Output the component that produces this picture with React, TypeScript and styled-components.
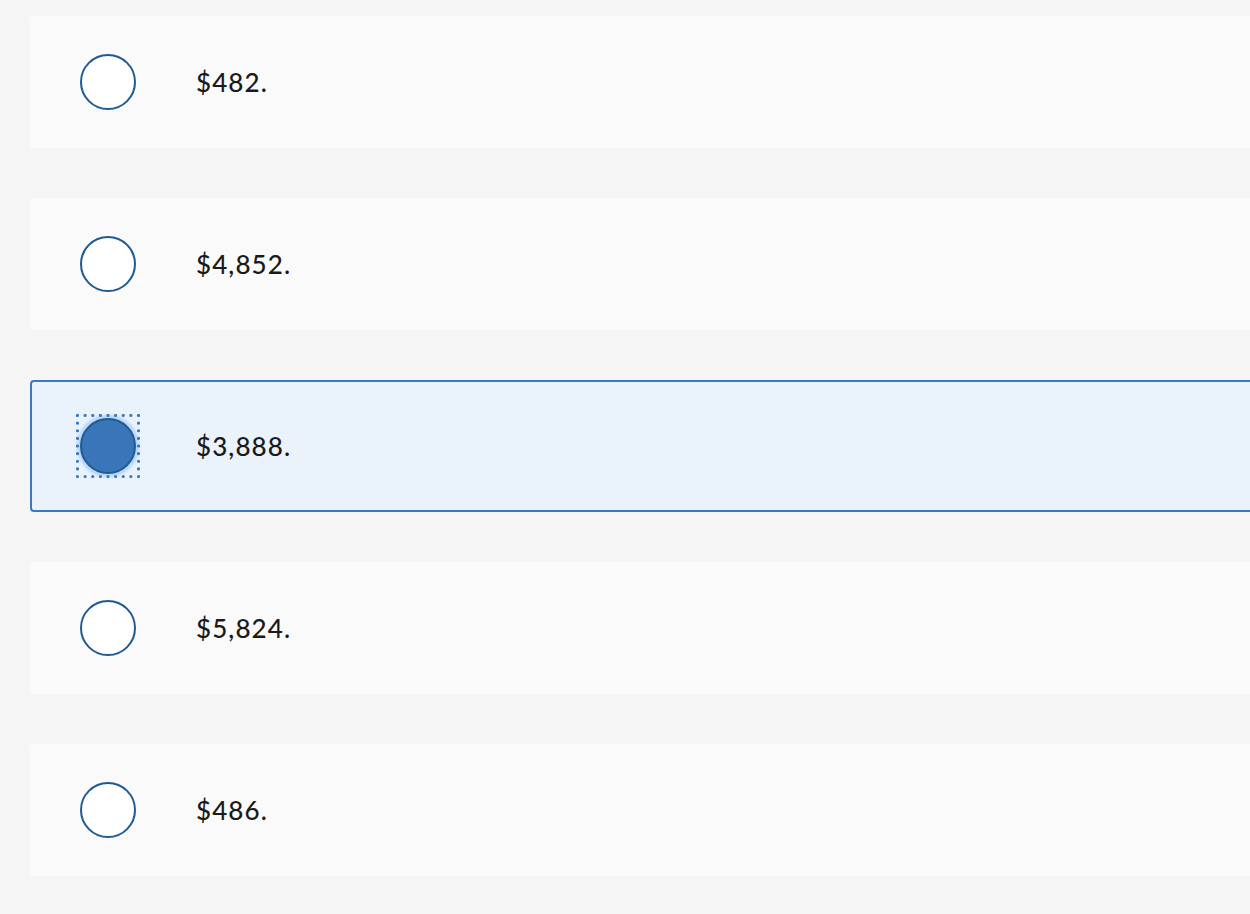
import styled, { createGlobalStyle } from "styled-components";

const GlobalStyle = createGlobalStyle`
  html, body {
    margin: 0;
    padding: 0;
    background: #f5f5f5;
    overflow: hidden;
  }
  body {
    font-family: "Lato", "Open Sans", sans-serif;
  }
`;

const answers = ["$482.", "$4,852.", "$3,888.", "$5,824.", "$486."];
const selectedIndex = 2;

// Dotted focus ring around the checked radio
function FocusRing() {
  return (
    <Ring width="64" height="64" viewBox="0 0 64 64">
      <rect
        x="1.5"
        y="1.5"
        width="61"
        height="61"
        fill="none"
        stroke="#3a78c0"
        strokeWidth="3.2"
        strokeLinecap="round"
        strokeDasharray="0 7.625"
      />
    </Ring>
  );
}

function App() {
  return (
    <>
      <GlobalStyle />
      <Page>
        {answers.map((text, index) => {
          const selected = index === selectedIndex;
          return (
            <Choice key={text} selected={selected}>
              <RadioWrap>
                <Radio selected={selected} />
                {selected && <FocusRing />}
              </RadioWrap>
              <Label>{text}</Label>
            </Choice>
          );
        })}
      </Page>
    </>
  );
}

const Page = styled.div`
  display: flex;
  flex-direction: column;
  gap: 50px;
  padding: 16px 0 40px 30px;
  width: 1300px;
`;

// One answer card
const Choice = styled.div<{ selected: boolean }>`
  display: flex;
  align-items: center;
  height: 132px;
  box-sizing: border-box;
  border-radius: 4px;
  padding-left: ${(p) => (p.selected ? "48px" : "50px")};
  background: ${(p) => (p.selected ? "#eaf2fc" : "#fafafa")};
  border: ${(p) => (p.selected ? "2px solid #3a78c0" : "none")};
`;

const RadioWrap = styled.div`
  position: relative;
  flex: 0 0 auto;
  width: 56px;
  height: 56px;
  margin-right: 60px;
`;

const Radio = styled.div<{ selected: boolean }>`
  width: 56px;
  height: 56px;
  box-sizing: border-box;
  border-radius: 50%;
  border: 2px solid #1f5a94;
  background: ${(p) => (p.selected ? "#3a75b9" : "#fff")};
  box-shadow: ${(p) => (p.selected ? "0 0 3px 3px #b3d4f6" : "none")};
`;

const Ring = styled.svg`
  position: absolute;
  left: -4px;
  top: -4px;
  pointer-events: none;
`;

const Label = styled.div`
  font-size: 26px;
  font-weight: 500;
  color: #1a1a1a;
  letter-spacing: 1.1px;
`;

export default App;
